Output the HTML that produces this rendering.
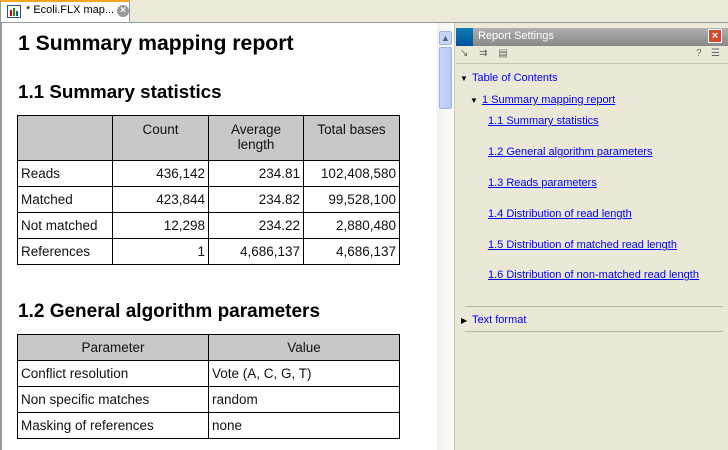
<!DOCTYPE html>
<html><head><style>
body{margin:0;width:728px;height:450px;overflow:hidden;background:#ECE9D8;font-family:"Liberation Sans",sans-serif;position:relative}
.a{position:absolute}
table{border-collapse:collapse;position:absolute;font-size:13.5px;color:#111}
td{border:1px solid #000;padding:0 3px;height:26px;box-sizing:border-box}
.h td{background:#C8C8C8;text-align:center;vertical-align:top;padding-top:6px}
.r{text-align:right}
h1,h2{margin:0;position:absolute;font-weight:bold;color:#000;white-space:nowrap}
.lk{position:absolute;color:#00f;text-decoration:underline;font-size:11px;white-space:nowrap}
</style></head><body>
<div class="a" style="left:0;top:0;width:130px;height:23px;background:#fff;border:1px solid #919B9C;border-top:2px solid #F5A623;box-sizing:border-box"></div>
<div class="a" style="left:7px;top:5px;width:14px;height:13px;border:1px solid #2A4C9C;background:#fff;box-sizing:border-box"><div class="a" style="left:2px;top:4px;width:2px;height:6px;background:#c00"></div><div class="a" style="left:5px;top:2px;width:2px;height:8px;background:#2a8a2a"></div><div class="a" style="left:8px;top:5px;width:2px;height:5px;background:#224fa0"></div></div>
<div class="a" style="left:26px;top:4px;font-size:11px;color:#000">* Ecoli.FLX map...</div>
<div class="a" style="left:117px;top:5px;width:12px;height:12px;border-radius:6px;background:#999;color:#fff;font-size:10px;line-height:12px;text-align:center;font-weight:bold">×</div>
<div class="a" style="left:130px;top:22px;width:598px;height:1px;background:#919B9C"></div>
<div class="a" style="left:0;top:23px;width:437px;height:427px;background:#fff;border-left:2px solid #919B9C;box-sizing:border-box"></div>
<h1 style="left:18px;top:32px;font-size:21.2px">1 Summary mapping report</h1>
<h2 style="left:18px;top:81px;font-size:18.8px">1.1 Summary statistics</h2>
<table style="left:17px;top:115px;width:383px">
<tr class="h"><td style="width:95px;height:45px"></td><td style="width:96px">Count</td><td style="width:95px">Average<br>length</td><td>Total bases</td></tr>
<tr><td>Reads</td><td class="r">436,142</td><td class="r">234.81</td><td class="r">102,408,580</td></tr>
<tr><td>Matched</td><td class="r">423,844</td><td class="r">234.82</td><td class="r">99,528,100</td></tr>
<tr><td>Not matched</td><td class="r">12,298</td><td class="r">234.22</td><td class="r">2,880,480</td></tr>
<tr><td>References</td><td class="r">1</td><td class="r">4,686,137</td><td class="r">4,686,137</td></tr>
</table>
<h2 style="left:18px;top:301px;font-size:19px">1.2 General algorithm parameters</h2>
<table style="left:17px;top:334px;width:383px">
<tr class="h"><td style="width:191px;padding-top:0;vertical-align:middle">Parameter</td><td style="padding-top:0;vertical-align:middle">Value</td></tr>
<tr><td>Conflict resolution</td><td>Vote (A, C, G, T)</td></tr>
<tr><td>Non specific matches</td><td>random</td></tr>
<tr><td>Masking of references</td><td>none</td></tr>
</table>
<div class="a" style="left:437px;top:23px;width:17px;height:427px;background:linear-gradient(90deg,#F3F1EC,#FEFEFB)"></div>
<div class="a" style="left:454px;top:23px;width:1px;height:427px;background:#C8C4B8"></div>
<div class="a" style="left:439px;top:31px;width:13px;height:14px;background:#C6D6FA;border:1px solid #9CB3EE;border-radius:2px;box-sizing:border-box;font-size:9px;text-align:center;color:#4D6185;line-height:12px">&#9650;</div>
<div class="a" style="left:439px;top:47px;width:13px;height:62px;background:linear-gradient(90deg,#C6D6FA,#B7CBF7);border:1px solid #9CB3EE;border-radius:2px;box-sizing:border-box"></div>
<div class="a" style="left:456px;top:28px;width:272px;height:422px;background:#EBE8D8"></div>
<div class="a" style="left:456px;top:28px;width:272px;height:18px;background:linear-gradient(#B0B0B0,#888)"></div>
<div class="a" style="left:456px;top:28px;width:17px;height:18px;background:linear-gradient(#0A7DB0,#0050A0)"></div>
<div class="a" style="left:478px;top:30px;font-size:11px;color:#fff">Report Settings</div>
<div class="a" style="left:708px;top:29px;width:14px;height:14px;background:#D8462C;border:1px solid #fff;box-sizing:border-box;color:#fff;font-size:11px;line-height:12px;text-align:center;font-weight:bold">×</div>
<div class="a" style="left:460px;top:48px;font-size:10px;color:#666;letter-spacing:4px">↘ ⇉ ▤</div>
<div class="a" style="left:696px;top:48px;font-size:10px;color:#666">?</div>
<div class="a" style="left:711px;top:48px;font-size:10px;color:#666">☰</div>
<div class="a" style="left:456px;top:63px;width:272px;height:1px;background:#C8C4B8"></div>
<div class="a" style="left:460px;top:74px;font-size:8px">▼</div>
<div class="a" style="left:472px;top:72px;font-size:11px;color:#00f">Table of Contents</div>
<div class="a" style="left:470px;top:96px;font-size:8px">▼</div>
<div class="lk" style="left:482px;top:94px">1 Summary mapping report</div>
<div class="lk" style="left:488px;top:115px">1.1 Summary statistics</div>
<div class="lk" style="left:488px;top:146px">1.2 General algorithm parameters</div>
<div class="lk" style="left:488px;top:177px">1.3 Reads parameters</div>
<div class="lk" style="left:488px;top:208px">1.4 Distribution of read length</div>
<div class="lk" style="left:488px;top:239px">1.5 Distribution of matched read length</div>
<div class="lk" style="left:488px;top:269px">1.6 Distribution of non-matched read length</div>
<div class="a" style="left:465px;top:306px;width:258px;height:1px;background:#B5B3A8"></div>
<div class="a" style="left:461px;top:316px;font-size:8px">▶</div>
<div class="a" style="left:472px;top:314px;font-size:11px;color:#00f">Text format</div>
<div class="a" style="left:465px;top:331px;width:258px;height:1px;background:#B5B3A8"></div>
</body></html>
